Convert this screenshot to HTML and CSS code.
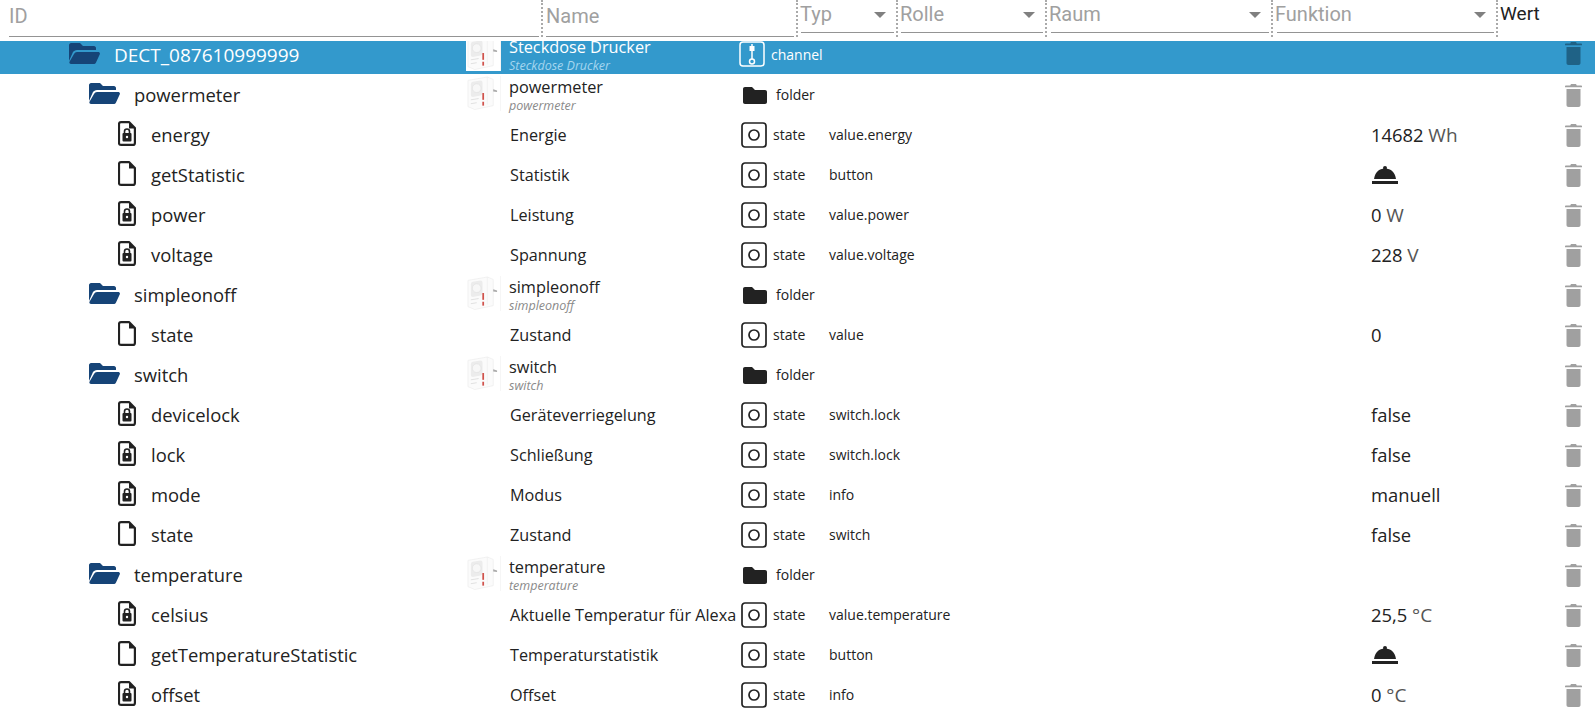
FILE: index.html
```html
<!DOCTYPE html>
<html lang="de">
<head>
<meta charset="utf-8">
<title>Objekte</title>
<link rel="stylesheet" href="styles.css">
</head>
<body>
<svg class="defs" width="0" height="0" aria-hidden="true">
  <symbol id="i-open" viewBox="0 0 31 21"><path d="M2 0h9l3 3h11c1 0 2 1 2 2v2H8c-2 0-3 1-4 2L0 18V2c0-1 1-2 2-2z"/><path d="M8 9h21c1.500 0 2.300 1 1.800 2.300L27 19.500c-.5 1-1.300 1.500-2.500 1.500H2c-1.300 0-2-1-1.500-2.200L5 11c.7-1.300 1.700-2 3-2z"/></symbol>
  <symbol id="i-file" viewBox="0 0 18 25"><path fill="none" stroke="currentColor" stroke-width="2.200" stroke-linejoin="round" d="M3 1.100h8l5.900 6v14.800c0 1.200-.8 2-2 2H3c-1.200 0-2-.8-2-2V3.100c0-1.200.8-2 2-2z"/><path fill="currentColor" d="M11 1v6.500h6z"/></symbol>
  <symbol id="i-lock" viewBox="0 0 18 25"><path fill="none" stroke="currentColor" stroke-width="2.200" stroke-linejoin="round" d="M3 1.100h8l5.900 6v14.800c0 1.200-.8 2-2 2H3c-1.200 0-2-.8-2-2V3.100c0-1.200.8-2 2-2z"/><path fill="currentColor" d="M11 1v6.500h6z"/><rect x="4.500" y="12" width="9" height="8.500" rx="1" fill="currentColor"/><path fill="none" stroke="currentColor" stroke-width="1.600" d="M6.500 12.500V10.500a2.500 2.500 0 0 1 5 0v2"/><circle cx="9" cy="16" r="1.200" fill="#fff"/></symbol>
  <symbol id="i-state" viewBox="0 0 26 26"><rect x="1" y="1" width="24" height="24" rx="3" fill="none" stroke="currentColor" stroke-width="1.700"/><circle cx="13" cy="13" r="5" fill="none" stroke="currentColor" stroke-width="1.700"/></symbol>
  <symbol id="i-channel" viewBox="0 0 26 26"><rect x="1" y="1" width="24" height="24" rx="3" fill="none" stroke="currentColor" stroke-width="1.500"/><rect x="10.500" y="5" width="5" height="5" fill="currentColor"/><path d="M13 3v15" stroke="currentColor" stroke-width="1.500"/><circle cx="13" cy="20.500" r="2.500" fill="none" stroke="currentColor" stroke-width="1.500"/></symbol>
  <symbol id="i-folder" viewBox="0 0 24 17"><path d="M2 0h7l3 3h10c1.200 0 2 .8 2 2v10c0 1.200-.8 2-2 2H2c-1.200 0-2-.8-2-2V2C0 .8.800 0 2 0z"/></symbol>
  <symbol id="i-trash" viewBox="0 0 17 23"><path d="M6 0h5l.8 1.500H16c.6 0 1 .4 1 1v.8H0v-.8c0-.6.4-1 1-1h4.200z"/><path d="M1.500 5h14v16c0 1.200-.8 2-2 2h-10c-1.200 0-2-.8-2-2z"/></symbol>
  <symbol id="i-bell" viewBox="0 0 26 18"><circle cx="13" cy="2" r="2"/><path d="M13 2.500c6 0 10 4 11 10.500H2C3 6.500 7 2.500 13 2.500z"/><rect x="0" y="15" width="26" height="3"/></symbol>
  <symbol id="i-plug" viewBox="0 0 35 35"><path d="M2 4L22 .5 28 3v27L9 34l-7-3z" fill="#fbfbfb" stroke="#ececec" stroke-width=".7"/><path d="M22 .5V29" stroke="#f0f0f0" stroke-width=".7"/><path d="M28 13l4 1.500v1.500l-4-.5z" fill="#aaa"/><path d="M5 8q0-2 2-2.500l8-1.500q2 0 2 2v11q0 2-2 2.500l-8 1.500q-2 0-2-2z" fill="#ececec"/><circle cx="11" cy="12" r="4.500" fill="#f7f7f7" stroke="#dedede" stroke-width=".6"/><rect x="16.800" y="17" width="1.800" height="7" fill="#d0524c"/><rect x="16.800" y="26" width="1.800" height="4" fill="#d0524c"/><path d="M5 24l8-1.300M5 28l6-1" stroke="#d4d4d4" stroke-width=".7"/></symbol>
</svg>

<div class="page">
  <header class="head">
    <div class="filter f-id"><span class="ph">ID</span></div>
    <div class="filter f-name"><span class="ph">Name</span></div>
    <div class="filter sel f-typ"><span class="ph">Typ</span><i class="arrow"></i></div>
    <div class="filter sel f-rolle"><span class="ph">Rolle</span><i class="arrow"></i></div>
    <div class="filter sel f-raum"><span class="ph">Raum</span><i class="arrow"></i></div>
    <div class="filter sel f-fn"><span class="ph">Funktion</span><i class="arrow"></i></div>
    <div class="wert">Wert</div>
  </header>

  <main class="list">
    <div class="row selected">
      <div class="id l1"><svg class="ic-open"><use href="#i-open"/></svg><span>DECT_087610999999</span></div>
      <svg class="plug"><use href="#i-plug"/></svg>
      <div class="name two"><b>Steckdose Drucker</b><em>Steckdose Drucker</em></div>
      <div class="type"><svg class="ic-type up"><use href="#i-channel"/></svg><span>channel</span></div>
      <div class="role"></div><div class="val"></div>
      <svg class="trash"><use href="#i-trash"/></svg>
    </div>
    <div class="row">
      <div class="id l2"><svg class="ic-open"><use href="#i-open"/></svg><span>powermeter</span></div>
      <svg class="plug"><use href="#i-plug"/></svg>
      <div class="name two"><b>powermeter</b><em>powermeter</em></div>
      <div class="type fold"><svg class="ic-folder"><use href="#i-folder"/></svg><span>folder</span></div>
      <div class="role"></div><div class="val"></div>
      <svg class="trash"><use href="#i-trash"/></svg>
    </div>
    <div class="row">
      <div class="id l3"><svg class="ic-file"><use href="#i-lock"/></svg><span>energy</span></div>
      <div class="noimg"></div><div class="name">Energie</div>
      <div class="type"><svg class="ic-type"><use href="#i-state"/></svg><span>state</span></div>
      <div class="role">value.energy</div><div class="val">14682 <small>Wh</small></div>
      <svg class="trash"><use href="#i-trash"/></svg>
    </div>
    <div class="row">
      <div class="id l3"><svg class="ic-file"><use href="#i-file"/></svg><span>getStatistic</span></div>
      <div class="noimg"></div><div class="name">Statistik</div>
      <div class="type"><svg class="ic-type"><use href="#i-state"/></svg><span>state</span></div>
      <div class="role">button</div><div class="val"><svg class="bell"><use href="#i-bell"/></svg></div>
      <svg class="trash"><use href="#i-trash"/></svg>
    </div>
    <div class="row">
      <div class="id l3"><svg class="ic-file"><use href="#i-lock"/></svg><span>power</span></div>
      <div class="noimg"></div><div class="name">Leistung</div>
      <div class="type"><svg class="ic-type"><use href="#i-state"/></svg><span>state</span></div>
      <div class="role">value.power</div><div class="val">0 <small>W</small></div>
      <svg class="trash"><use href="#i-trash"/></svg>
    </div>
    <div class="row">
      <div class="id l3"><svg class="ic-file"><use href="#i-lock"/></svg><span>voltage</span></div>
      <div class="noimg"></div><div class="name">Spannung</div>
      <div class="type"><svg class="ic-type"><use href="#i-state"/></svg><span>state</span></div>
      <div class="role">value.voltage</div><div class="val">228 <small>V</small></div>
      <svg class="trash"><use href="#i-trash"/></svg>
    </div>
    <div class="row">
      <div class="id l2"><svg class="ic-open"><use href="#i-open"/></svg><span>simpleonoff</span></div>
      <svg class="plug"><use href="#i-plug"/></svg>
      <div class="name two"><b>simpleonoff</b><em>simpleonoff</em></div>
      <div class="type fold"><svg class="ic-folder"><use href="#i-folder"/></svg><span>folder</span></div>
      <div class="role"></div><div class="val"></div>
      <svg class="trash"><use href="#i-trash"/></svg>
    </div>
    <div class="row">
      <div class="id l3"><svg class="ic-file"><use href="#i-file"/></svg><span>state</span></div>
      <div class="noimg"></div><div class="name">Zustand</div>
      <div class="type"><svg class="ic-type"><use href="#i-state"/></svg><span>state</span></div>
      <div class="role">value</div><div class="val">0</div>
      <svg class="trash"><use href="#i-trash"/></svg>
    </div>
    <div class="row">
      <div class="id l2"><svg class="ic-open"><use href="#i-open"/></svg><span>switch</span></div>
      <svg class="plug"><use href="#i-plug"/></svg>
      <div class="name two"><b>switch</b><em>switch</em></div>
      <div class="type fold"><svg class="ic-folder"><use href="#i-folder"/></svg><span>folder</span></div>
      <div class="role"></div><div class="val"></div>
      <svg class="trash"><use href="#i-trash"/></svg>
    </div>
    <div class="row">
      <div class="id l3"><svg class="ic-file"><use href="#i-lock"/></svg><span>devicelock</span></div>
      <div class="noimg"></div><div class="name">Geräteverriegelung</div>
      <div class="type"><svg class="ic-type"><use href="#i-state"/></svg><span>state</span></div>
      <div class="role">switch.lock</div><div class="val">false</div>
      <svg class="trash"><use href="#i-trash"/></svg>
    </div>
    <div class="row">
      <div class="id l3"><svg class="ic-file"><use href="#i-lock"/></svg><span>lock</span></div>
      <div class="noimg"></div><div class="name">Schließung</div>
      <div class="type"><svg class="ic-type"><use href="#i-state"/></svg><span>state</span></div>
      <div class="role">switch.lock</div><div class="val">false</div>
      <svg class="trash"><use href="#i-trash"/></svg>
    </div>
    <div class="row">
      <div class="id l3"><svg class="ic-file"><use href="#i-lock"/></svg><span>mode</span></div>
      <div class="noimg"></div><div class="name">Modus</div>
      <div class="type"><svg class="ic-type"><use href="#i-state"/></svg><span>state</span></div>
      <div class="role">info</div><div class="val">manuell</div>
      <svg class="trash"><use href="#i-trash"/></svg>
    </div>
    <div class="row">
      <div class="id l3"><svg class="ic-file"><use href="#i-file"/></svg><span>state</span></div>
      <div class="noimg"></div><div class="name">Zustand</div>
      <div class="type"><svg class="ic-type"><use href="#i-state"/></svg><span>state</span></div>
      <div class="role">switch</div><div class="val">false</div>
      <svg class="trash"><use href="#i-trash"/></svg>
    </div>
    <div class="row">
      <div class="id l2"><svg class="ic-open"><use href="#i-open"/></svg><span>temperature</span></div>
      <svg class="plug"><use href="#i-plug"/></svg>
      <div class="name two"><b>temperature</b><em>temperature</em></div>
      <div class="type fold"><svg class="ic-folder"><use href="#i-folder"/></svg><span>folder</span></div>
      <div class="role"></div><div class="val"></div>
      <svg class="trash"><use href="#i-trash"/></svg>
    </div>
    <div class="row">
      <div class="id l3"><svg class="ic-file"><use href="#i-lock"/></svg><span>celsius</span></div>
      <div class="noimg"></div><div class="name">Aktuelle Temperatur für Alexa</div>
      <div class="type"><svg class="ic-type"><use href="#i-state"/></svg><span>state</span></div>
      <div class="role">value.temperature</div><div class="val">25,5 <small>°C</small></div>
      <svg class="trash"><use href="#i-trash"/></svg>
    </div>
    <div class="row">
      <div class="id l3"><svg class="ic-file"><use href="#i-file"/></svg><span>getTemperatureStatistic</span></div>
      <div class="noimg"></div><div class="name">Temperaturstatistik</div>
      <div class="type"><svg class="ic-type"><use href="#i-state"/></svg><span>state</span></div>
      <div class="role">button</div><div class="val"><svg class="bell"><use href="#i-bell"/></svg></div>
      <svg class="trash"><use href="#i-trash"/></svg>
    </div>
    <div class="row">
      <div class="id l3"><svg class="ic-file"><use href="#i-lock"/></svg><span>offset</span></div>
      <div class="noimg"></div><div class="name">Offset</div>
      <div class="type"><svg class="ic-type"><use href="#i-state"/></svg><span>state</span></div>
      <div class="role">info</div><div class="val">0 <small>°C</small></div>
      <svg class="trash"><use href="#i-trash"/></svg>
    </div>
  </main>
</div>
</body>
</html>
```
FILE: styles.css
```css
* { box-sizing: border-box; }
html, body { margin: 0; padding: 0; background: #fff; }
body { font-family: "Open Sans", "Noto Sans", sans-serif; color: #222; overflow: hidden; }
.defs { position: absolute; }
.page { position: relative; width: 1595px; height: 710px; overflow: hidden; }

/* filter header, lying over the scrolled list */
.head {
  position: absolute; top: 0; left: 0; right: 0; height: 41px; z-index: 2;
  background: #fff; display: flex; font-family: Roboto, "Liberation Sans", sans-serif;
}
.filter { position: relative; height: 37px; padding-left: 9px; border-right: 2px dotted #aaa; }
.filter::after { content: ""; position: absolute; left: 9px; right: 2px; bottom: 0; height: 1px; background: #949494; }
.ph { display: block; font-size: 20px; line-height: 24px; padding-top: 4px; color: #a0a0a0; }
.sel { display: flex; align-items: flex-start; }
.sel .ph { padding-top: 2px; }
.sel::after { bottom: 4px; }
.f-id { width: 543px; }
.f-name { width: 255px; padding-left: 3px; } .f-name::after { left: 3px; }
.f-typ { width: 100px; padding-left: 2px; } .f-typ::after { left: 3px; }
.f-rolle { width: 149px; padding-left: 2px; } .f-rolle::after { left: 3px; }
.f-raum { width: 226px; padding-left: 2px; } .f-raum::after { left: 4px; }
.f-fn { width: 225px; padding-left: 2px; } .f-fn::after { left: 4px; }
.arrow {
  position: absolute; top: 12px; right: 10px; width: 0; height: 0;
  border-left: 6px solid transparent; border-right: 6px solid transparent; border-top: 6px solid #808080;
}
.wert { padding: 2px 0 0 2px; font-size: 19px; line-height: 24px; color: #222; }

/* object rows */
.list { padding-top: 35px; }
.row {
  display: flex; align-items: center; height: 40px; font-size: 14px; line-height: 18px;
}
.row.selected { background: linear-gradient(#3399cc, #3399cc) 0 0 / 100% 39px no-repeat; color: #fff; }
.id { width: 466px; display: flex; align-items: center; font-size: 18.4px; color: #222; }
.selected .id { color: #fff; font-size: 19px; }
.l1 { padding-left: 69px; }
.l2 { padding-left: 89px; }
.l3 { padding-left: 118px; }
.l1 span, .l2 span { margin-left: 14px; }
.l3 span { margin-left: 15px; }
.ic-open { width: 31px; height: 21px; fill: #164477; margin-top: -3px; }
.ic-file { width: 18px; height: 25px; color: #222; margin-top: -3px; }
.plug { width: 35px; height: 35px; background: #fff; margin-top: -3px; flex: none; border-right: 1px solid #f6f6f6; }
.noimg { width: 35px; flex: none; }
.name { width: 240px; padding-left: 9px; font-size: 16.2px; white-space: nowrap; }
.two { padding-left: 8px; display: flex; flex-direction: column; }
.two b { font-weight: 400; font-size: 16.3px; line-height: 20px; }
.two em { font-size: 12.5px; line-height: 15px; padding-top: 1px; color: #8a8a8a; }
.selected .two em { color: #a5d6ef; }
.type { width: 88px; display: flex; align-items: center; flex: none; }
.type span { margin-left: 6px; }
.ic-type { width: 26px; height: 26px; color: #222; margin-top: -1px; }
.up { color: #fff; margin: -3px 0 0 -2px; }
.up + span { margin-left: 6px; margin-top: -1px; }
.fold { padding-left: 2px; }
.ic-folder { width: 24px; height: 17px; fill: #222; }
.fold span { margin-left: 9px; }
.role { width: 541px; flex: none; }
.val { width: 195px; padding-left: 1px; flex: none; font-size: 18.4px; }
.val small { font-size: 19px; color: #555; }
.bell { display: block; width: 26px; height: 18px; fill: #222; margin: -1px 0 0 1px; }
.trash { width: 17px; height: 23px; fill: #a0a0a0; flex: none; }
.selected .trash { fill: #1f6286; margin-top: -3px; }
```
